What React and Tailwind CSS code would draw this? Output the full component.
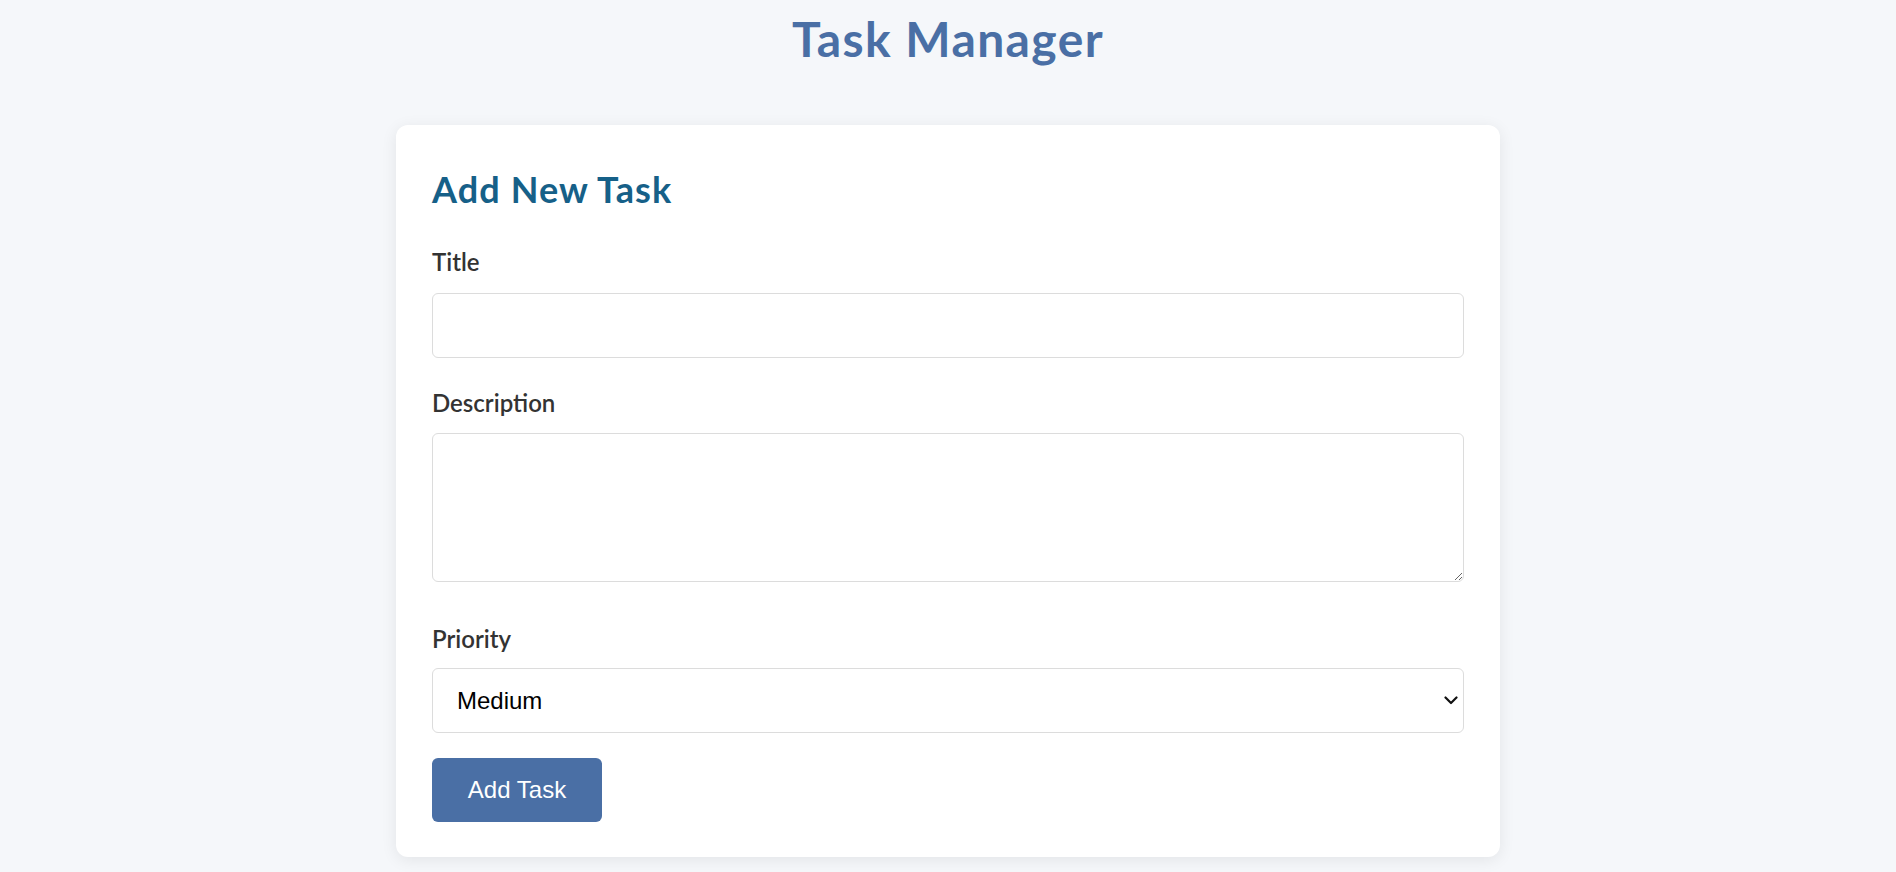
import { useState } from 'react';

export default function App() {
  const [form, setForm] = useState({ title: '', description: '', priority: 'medium' });

  const handleChange = (e) => {
    const { name, value } = e.target;
    setForm((prev) => ({ ...prev, [name]: value }));
  };

  return (
    <div className="min-h-screen bg-[#f5f7fa] font-['Lato',sans-serif] pt-[7px]">
      <h1 className="text-center text-[48px] leading-[64px] font-bold tracking-[1.4px] text-[#4a6fa5]">Task Manager</h1>

      {/* Form card */}
      <div className="mx-auto mt-[54px] w-[1104px] rounded-xl bg-white px-9 pt-10 pb-[35px] shadow-[0_3px_16px_rgba(0,0,0,0.08)]">
        <h2 className="text-[36px] leading-[48px] font-bold tracking-[1.1px] text-[#166088]">Add New Task</h2>

        <form className="mt-[33px] flex flex-col" onSubmit={(e) => e.preventDefault()}>
          <label className="block text-[24px] leading-[32px] font-semibold text-[#333]">Title</label>
          <input
            type="text"
            name="title"
            value={form.title}
            onChange={handleChange}
            className="mt-[15px] h-[65px] w-full rounded-md border border-[#dcdcdc] px-5 font-['Liberation_Sans',sans-serif] text-[24px] outline-none"
          />

          <label className="mt-[29px] block text-[24px] leading-[32px] font-semibold text-[#333]">Description</label>
          <textarea
            name="description"
            value={form.description}
            onChange={handleChange}
            className="mt-[14px] h-[149px] w-full rounded-md border border-[#dcdcdc] px-5 py-3 font-['Liberation_Sans',sans-serif] text-[24px] outline-none"
          />

          <label className="mt-[41px] block text-[24px] leading-[32px] font-semibold text-[#333]">Priority</label>
          <div className="relative mt-[13px]">
            <select
              name="priority"
              value={form.priority}
              onChange={handleChange}
              className="h-[65px] w-full appearance-none rounded-md border border-[#dcdcdc] bg-white pl-[24px] font-['Liberation_Sans',sans-serif] text-[24px] text-black outline-none"
            >
              <option value="low">Low</option>
              <option value="medium">Medium</option>
              <option value="high">High</option>
            </select>
            <svg
              className="pointer-events-none absolute right-[6px] top-[28px]"
              width="14"
              height="9"
              viewBox="0 0 14 9"
              fill="none"
            >
              <path d="M1.5 1.5 L7 7 L12.5 1.5" stroke="#111" strokeWidth="2.2" strokeLinecap="round" strokeLinejoin="round" />
            </svg>
          </div>

          <div className="mt-[25px]">
            <button
              type="submit"
              className="h-16 w-[170px] rounded-md bg-[#4a6fa5] font-['Liberation_Sans',sans-serif] text-[24px] text-white"
            >
              Add Task
            </button>
          </div>
        </form>
      </div>
    </div>
  );
}
